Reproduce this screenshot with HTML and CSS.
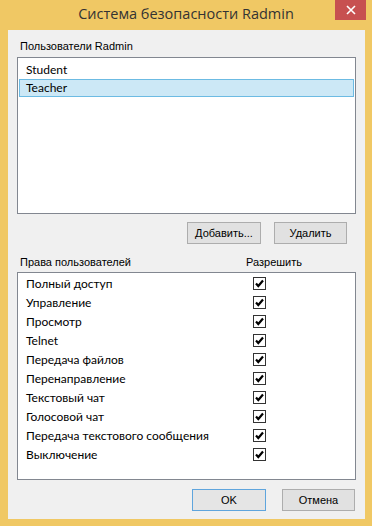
FILE: index.html
```html
<!DOCTYPE html>
<html lang="ru">

<head>
    <meta charset="UTF-8">
    <meta name="viewport" content="width=device-width, initial-scale=1.0">
    <title>Система безопасности Radmin</title>
    <link rel="stylesheet" href="styles.css">
</head>

<body>

    <div class="window">
        <div class="titlebar">
            <span></span>
            <div class="title">Система безопасности Radmin</div>
            <button class="close" type="button">
                <svg width="10" height="10" viewBox="0 0 10 10">
                    <path d="M1 1 L9 9 M9 1 L1 9" stroke="#fff" stroke-width="1.6" fill="none" />
                </svg>
            </button>
        </div>

        <div class="client">
            <div class="label users-label">Пользователи Radmin</div>
            <ul class="listbox users">
                <li>Student</li>
                <li class="selected">Teacher</li>
            </ul>

            <div class="actions">
                <button class="btn" type="button">Добавить...</button>
                <button class="btn" type="button">Удалить</button>
            </div>

            <div class="label rights-head">
                <span class="rights-col">Права пользователей</span>
                <span>Разрешить</span>
            </div>
            <ul class="listbox rights">
                <li><span class="right-name">Полный доступ</span><span class="check"></span></li>
                <li><span class="right-name">Управление</span><span class="check"></span></li>
                <li><span class="right-name">Просмотр</span><span class="check"></span></li>
                <li><span class="right-name">Telnet</span><span class="check"></span></li>
                <li><span class="right-name">Передача файлов</span><span class="check"></span></li>
                <li><span class="right-name">Перенаправление</span><span class="check"></span></li>
                <li><span class="right-name">Текстовый чат</span><span class="check"></span></li>
                <li><span class="right-name">Голосовой чат</span><span class="check"></span></li>
                <li><span class="right-name">Передача текстового сообщения</span><span class="check"></span></li>
                <li><span class="right-name">Выключение</span><span class="check"></span></li>
            </ul>

            <div class="footer">
                <button class="btn btn-default" type="button">OK</button>
                <button class="btn" type="button">Отмена</button>
            </div>
        </div>
    </div>

    <script>
        // Same check mark in every box
        const mark = '<svg width="11" height="11" viewBox="0 0 11 11">' +
            '<path d="M2 5.5 L4.3 8 L9 2.5" stroke="#000" stroke-width="2.2" fill="none" />' +
            '</svg>';
        document.querySelectorAll(".check").forEach(function (box) {
            box.innerHTML = mark;
        });
    </script>

</body>

</html>
```

FILE: styles.css
```css
body {
    margin: 0;
    background-color: #f0c864;
    font-family: "Liberation Sans", Arial, sans-serif;
    font-size: 11px;
    color: #000;
}

.window {
    width: 372px;
    height: 526px;
    display: flex;
    flex-direction: column;
    background-color: #f0c864;
}

.titlebar {
    height: 30px;
    display: grid;
    grid-template-columns: 1fr auto 1fr;
    align-items: start;
}

.title {
    font-family: "Open Sans", "Noto Sans", sans-serif;
    font-size: 14.5px;
    line-height: 28px;
    color: #333;
}

.close {
    justify-self: end;
    width: 31px;
    height: 20px;
    margin-right: 6px;
    padding: 0;
    border: none;
    background-color: #c75050;
    display: flex;
    align-items: center;
    justify-content: center;
}

.client {
    flex: 1;
    margin: 0 7px 7px 8px;
    background-color: #f0f0f0;
    display: flex;
    flex-direction: column;
}

.label {
    line-height: 13px;
    padding-left: 12px;
}

.users-label {
    margin-top: 10px;
}

.listbox {
    list-style: none;
    margin: 0 9px;
    padding: 0;
    box-sizing: border-box;
    background-color: white;
    border: 1px solid #828790;
    font-family: Lato, "Open Sans", sans-serif;
    font-size: 12px;
}

.users {
    margin-top: 4px;
    height: 157px;
    padding: 3px 1px 0;
}

.users li {
    height: 18px;
    line-height: 18px;
    padding-left: 7px;
    box-sizing: border-box;
}

.users li.selected {
    background-color: #cce8f6;
    border: 1px solid #6cbbe3;
    line-height: 16px;
    padding-left: 6px;
}

.actions,
.footer {
    display: flex;
    justify-content: flex-end;
}

.actions {
    margin-top: 8px;
    margin-right: 18px;
    gap: 13px;
}

.btn {
    height: 22px;
    padding: 0;
    box-sizing: border-box;
    background-color: #e1e1e1;
    border: 1px solid #adadad;
    font-family: "Liberation Sans", Arial, sans-serif;
    font-size: 11px;
    color: #000;
}

.actions .btn:first-child {
    width: 74px;
}

.actions .btn:last-child {
    width: 73px;
}

.rights-head {
    margin-top: 12px;
    display: flex;
}

.rights-col {
    width: 226px;
}

.rights {
    margin-top: 3px;
    height: 208px;
    padding-top: 1px;
}

.rights li {
    height: 19px;
    display: flex;
    align-items: center;
    padding-left: 8px;
}

.right-name {
    width: 227px;
}

.check {
    width: 13px;
    height: 13px;
    box-sizing: border-box;
    border: 1px solid #333;
    background-color: white;
    display: flex;
    align-items: center;
    justify-content: center;
}

.check svg {
    display: block;
}

.footer {
    margin-top: 9px;
    margin-right: 10px;
    gap: 16px;
}

.footer .btn {
    width: 74px;
}

.footer .btn:last-child {
    width: 73px;
}

.btn-default {
    border-color: #5fa5dd;
    background-color: #e5e5e5;
}
```
